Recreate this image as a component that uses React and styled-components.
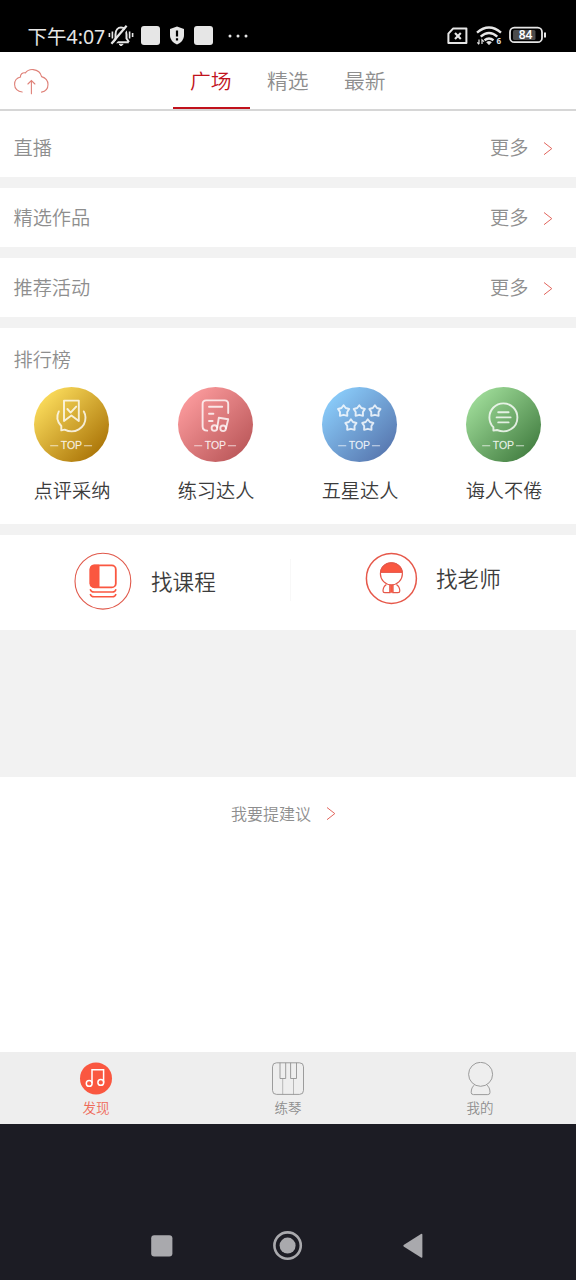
import React from 'react'
import styled, { createGlobalStyle } from 'styled-components'

const colors = {
  red: '#c1121c',
  coral: '#fa5740',
  grey: '#8e8e8e',
  dark: '#3c3c3c',
  line: '#d6d6d6',
  gap: '#f2f2f2',
  nav: '#1c1c24',
  navIcon: '#a9a9ad',
}

const sections = ['直播', '精选作品', '推荐活动']

const ranks = [
  { label: '点评采纳', from: '#fbdc5c', to: '#ab7508', Art: RibbonArt },
  { label: '练习达人', from: '#fb9a9c', to: '#bc595b', Art: SheetArt },
  { label: '五星达人', from: '#8accfa', to: '#5878b0', Art: StarsArt },
  { label: '诲人不倦', from: '#9edb98', to: '#458043', Art: ChatArt },
]

export default function App() {
  return (
    <>
      <GlobalStyle />
      <Screen>
        <StatusBar>
          <StatusGroup>
            <Clock>下午4:07</Clock>
            <MutedBell />
            <AppSquare />
            <Shield />
            <AppSquare />
            <Dots />
          </StatusGroup>
          <StatusRight>
            <StatusIcons />
          </StatusRight>
        </StatusBar>

        <Header>
          <UploadButton>
            <CloudUpload />
          </UploadButton>
          <Tab $active>广场</Tab>
          <Tab>精选</Tab>
          <Tab>最新</Tab>
        </Header>

        {sections.map((title, i) => (
          <SectionRow key={title} $first={i === 0}>
            <span>{title}</span>
            <More>
              更多
              <Chevron />
            </More>
          </SectionRow>
        ))}

        <RankPanel>
          <RankTitle>排行榜</RankTitle>
          <RankGrid>
            {ranks.map(rank => (
              <RankItem key={rank.label}>
                <Badge $from={rank.from} $to={rank.to}>
                  <RankIcon Art={rank.Art} />
                </Badge>
                <RankLabel>{rank.label}</RankLabel>
              </RankItem>
            ))}
          </RankGrid>
        </RankPanel>

        <FindPanel>
          <FindCourse>
            <CourseIcon />
            找课程
          </FindCourse>
          <Divider />
          <FindTeacher>
            <TeacherIcon />
            找老师
          </FindTeacher>
        </FindPanel>

        <Blank />

        <Feedback>
          我要提建议
          <Chevron />
        </Feedback>

        <TabBar>
          <TabItem $active>
            <DiscoverIcon />
            发现
          </TabItem>
          <TabItem>
            <PianoIcon />
            练琴
          </TabItem>
          <TabItem>
            <MeIcon />
            我的
          </TabItem>
        </TabBar>

        <SystemNav>
          <svg width="22" height="22" viewBox="0 0 22 22">
            <rect x="0.2" y="0.2" width="21.2" height="21.2" rx="3" fill={colors.navIcon} />
          </svg>
          <svg width="30" height="30" viewBox="0 0 30 30">
            <circle cx="14.6" cy="14.6" r="13.2" fill="none" stroke={colors.navIcon} strokeWidth="2.6" />
            <circle cx="14.6" cy="14.6" r="8" fill={colors.navIcon} />
          </svg>
          <svg width="21" height="26" viewBox="0 0 21 26">
            <path d="M1 11.8L18 1Q19.4 .5 19.4 1.8V24Q19.4 25.2 18 24.6L1 13.8Q-.4 12.8 1 11.8Z" fill={colors.navIcon} />
          </svg>
        </SystemNav>
      </Screen>
    </>
  )
}

function MutedBell() {
  return (
    <svg width="26" height="22" viewBox="0 0 26 22" fill="none" stroke="#e6e6e6" strokeWidth="2">
      <path d="M5.4 17.2H20.8M7.5 16V9.5C7.5 5.2 10 2.6 13 2.6S18.5 5.2 18.5 9.5V13.5L21 17" />
      <path d="M5.4 20L20.2 2.2" stroke="#000" strokeWidth="2" />
      <path d="M3.4 18.8L18.6 .8" strokeWidth="2.2" />
      <path d="M1.4 8V12M4.4 6.5V13.5M21.6 6.5V13.5M24.6 8V12" strokeWidth="1.6" />
      <path d="M11 19.3H15.2L13 20.8Z" fill="#e6e6e6" strokeWidth="1" />
    </svg>
  )
}

function Shield() {
  return (
    <svg width="14" height="19" viewBox="0 0 14 19">
      <path d="M7 .5L14 3V9C14 13.5 11 17 7 18.5C3 17 0 13.5 0 9V3Z" fill="#e6e6e6" />
      <path d="M7 4.5V10.4M7 12.2V14.6" stroke="#000" strokeWidth="2.2" />
    </svg>
  )
}

function Dots() {
  return (
    <svg width="20" height="4" viewBox="0 0 20 4" fill="#e6e6e6">
      <circle cx="2" cy="2" r="1.5" />
      <circle cx="10" cy="2" r="1.5" />
      <circle cx="18" cy="2" r="1.5" />
    </svg>
  )
}

function StatusIcons() {
  return (
    <svg width="100" height="22" viewBox="0 0 100 22" fill="none" stroke="#e6e6e6">
      <path d="M7 3.6H20.4V18H2.4V8.6Z" strokeWidth="2" strokeLinejoin="round" />
      <path d="M9 7.9L14.8 13.9M14.8 7.9L9 13.9" strokeWidth="2.1" />
      <path d="M31 7.6Q43 -2.6 55 7.6M34.7 11.6Q43 4.6 51.3 11.6M38.5 15.2Q43 11.6 47.5 15.2" strokeWidth="2.4" />
      <path d="M40.6 17.2Q43 15.3 45.4 17.2L43 19.8Z" fill="#e6e6e6" strokeWidth="0.6" />
      <path d="M33 14.6V19.1M31.4 17.4L33 19.4M36 19.1V14.8L38 16.6" strokeWidth="1.2" />
      <SmallDigit x="50.6" y="19.4">6</SmallDigit>
      <rect x="64" y="2.6" width="32" height="14.6" rx="4.3" strokeWidth="1.8" />
      <rect x="67" y="5" width="22.5" height="10" rx="1.5" fill="#4b4b4b" stroke="none" />
      <path d="M99 7.6V12.4" strokeWidth="2" />
      <BatteryText x="79.6" y="14.3" textAnchor="middle">84</BatteryText>
    </svg>
  )
}

function CloudUpload() {
  return (
    <svg width="35" height="28" viewBox="0 0 35 28" fill="none" stroke="#df8178" strokeWidth="1.1" strokeLinecap="round">
      <path d="M8.2 24C3.6 23.6.6 20.4.6 16.4C.6 12.6 3 9.8 6.5 9C6.1 6.4 8.4 4.3 11.4 4.9C13.3 2.4 16 1.3 19.2 1.6C23.4 2 26.7 4.6 27.6 8.6C31.3 9.7 34 12.6 34 16.6C34 20.6 31.4 23.5 27.5 24.1" />
      <path d="M17.4 25.8V12.7M13.9 16L17.4 12.5L20.9 16" />
    </svg>
  )
}

function Chevron() {
  return (
    <svg width="10" height="14" viewBox="0 0 10 14" fill="none" stroke="#e2655c" strokeWidth="1">
      <path d="M1 .5L8.8 6.6L1 12.7" />
    </svg>
  )
}

function RankIcon({ Art }) {
  return (
    <svg width="75" height="75" viewBox="0.4 0 75 75" fill="none" stroke="#fff" strokeOpacity="0.8" strokeWidth="1.9" strokeLinecap="round" strokeLinejoin="round">
      <Art />
      <path d="M17 58.7H24.2M50.8 58.7H58" strokeWidth="1.1" strokeOpacity="0.7" />
      <TopText x="37.8" y="62.4" textAnchor="middle">TOP</TopText>
    </svg>
  )
}

function RibbonArt() {
  return (
    <>
      <path d="M30.4 13.6H45.2V34L37.8 28.4L30.4 34Z" />
      <path d="M33.8 22L37 25.6L42.6 19.6" />
      <path d="M25.2 24.4C22.6 29.5 23.8 35 27.7 39V43.4L31 42.6C41 47.6 52 41 51.9 30.6C51.8 28.2 51.2 26 50.2 24.4" />
    </>
  )
}

function SheetArt() {
  return (
    <>
      <path d="M50.6 26V17Q50.6 13.4 47 13.4H28.6Q25 13.4 25 17V39.4Q25 43.4 29.6 43.6" />
      <path d="M31.4 19.8H44.6M31.4 26.8H35.8M31.4 34H35" />
      <path d="M39.6 40.6L41.2 30.8L50.6 32.2L48.4 41.2" />
      <circle cx="36.8" cy="41" r="2.8" />
      <circle cx="45.5" cy="41.3" r="2.8" />
    </>
  )
}

function StarsArt() {
  const star = 'M0 -5.8L2.1 -3L5.6 -2L3.6 1.1L3.7 4.8L0 3.8L-3.7 4.8L-3.6 1.1L-5.6 -2L-2.1 -3Z'
  const points = [[22, 24], [37.7, 24], [53.3, 24], [29.3, 38], [46.2, 38]]
  return points.map(([x, y]) => <path key={x} d={star} transform={`translate(${x} ${y})`} />)
}

function ChatArt() {
  return (
    <>
      <path d="M27.8 40.2V43.6L31.4 43C42 47.2 51.8 40.4 51.8 30.4C51.8 22.6 45.6 16.4 37.8 16.4S23.8 22.6 23.8 30.4C23.8 34.4 25.2 37.6 27.8 40.2Z" />
      <path d="M32.6 25.2H43M31 30.4H45M32.6 35.4H43" />
    </>
  )
}

function CourseIcon() {
  return (
    <svg width="58" height="58" viewBox="0 0 58 58" fill="none" stroke={colors.coral}>
      <circle cx="28.9" cy="29.2" r="27.9" stroke="#e0594b" strokeWidth="1.1" />
      <path d="M20 13.2H25V35.4H20Q16.2 35.4 16.2 31.6V17Q16.2 13.2 20 13.2Z" fill={colors.coral} />
      <rect x="16.4" y="13.4" width="25.4" height="22" rx="4" strokeWidth="1.8" />
      <path d="M16.2 37.2Q17 40.1 20 40.1H38.4Q41.2 40.1 42 37.2M16.2 42Q17 44.8 20 44.8H38.4Q41.2 44.8 42 42" strokeWidth="1.5" />
    </svg>
  )
}

function TeacherIcon() {
  return (
    <svg width="53" height="53" viewBox="0 0 53 53" fill="none" stroke="#e6584a">
      <circle cx="26.4" cy="26.4" r="25" strokeWidth="1.5" />
      <path d="M15.5 20.4C16 14.8 20.4 10.8 26.4 10.8S36.8 14.8 37.3 20.4Z" fill={colors.coral} />
      <circle cx="26.4" cy="21.8" r="11" strokeWidth="1.2" />
      <path d="M21.4 32.4C19 34 18 36.6 18 39Q18 40.6 19.8 40.6H24.8V33M31.4 32.4C33.8 34 34.8 36.6 34.8 39Q34.8 40.6 33 40.6H28V33" strokeWidth="1.2" />
      <path d="M25.2 33H27.8V40.6H25.2Z" fill={colors.coral} strokeWidth="0.4" />
    </svg>
  )
}

function DiscoverIcon() {
  return (
    <svg width="34" height="34" viewBox="0 0 34 34" fill="none" stroke="#fff" strokeWidth="1.5">
      <circle cx="17" cy="16.4" r="16" fill={colors.coral} stroke="none" />
      <path d="M13 21.2V7.8H24.6V20.4" />
      <circle cx="10.2" cy="21.4" r="2.9" />
      <circle cx="21.8" cy="20.4" r="2.9" />
    </svg>
  )
}

function PianoIcon() {
  return (
    <svg width="34" height="34" viewBox="0 0 34 34" fill="none" stroke="#929292" strokeWidth="0.9">
      <rect x="1.5" y="0.8" width="31" height="31.6" rx="4" />
      <path d="M9 .8V16.5H14.7V.8M19.6 .8V16.5H25.5V.8" />
      <path d="M11.7 16.5V32.4M22.5 16.5V32.4" strokeWidth="0.6" />
    </svg>
  )
}

function MeIcon() {
  return (
    <svg width="34" height="34" viewBox="0 0 34 34" fill="none" stroke="#929292" strokeWidth="0.9">
      <circle cx="17.6" cy="12.3" r="12" />
      <path d="M11.6 22.8C9.4 24.4 8.2 27 8.2 30.4Q8.2 32.6 10.4 32.6H24.8Q27 32.6 27 30.4C27 27 25.8 24.4 23.6 22.8" />
    </svg>
  )
}

const GlobalStyle = createGlobalStyle`
  body {
    margin: 0;
    background: #fff;
  }
  * {
    box-sizing: border-box;
  }
  svg {
    display: block;
    flex: none;
  }
`

const Screen = styled.div`
  width: 576px;
  height: 1280px;
  display: flex;
  flex-direction: column;
  overflow: hidden;
  font-family: 'Noto Sans CJK SC', sans-serif;
  font-size: 19.2px;
  font-weight: 350;
  line-height: 28px;
  color: ${colors.grey};
  background: #fff;
`

const StatusBar = styled.div`
  flex: none;
  height: 52px;
  padding: 19px 30px 0 27.5px;
  display: flex;
  justify-content: space-between;
  align-items: flex-start;
  background: #000;
`

const StatusGroup = styled.div`
  height: 33px;
  display: flex;
  align-items: center;
`

const StatusRight = styled.div`
  padding-top: 6px;
`

const Clock = styled.div`
  width: 80.5px;
  padding-top: 2px;
  color: #e6e6e6;
  font-family: 'Noto Sans', 'Noto Sans CJK SC', sans-serif;
  font-size: 19.5px;
  font-weight: 400;
  white-space: nowrap;
`

const AppSquare = styled.div`
  width: 19px;
  height: 19px;
  margin: 0 10px 0 7px;
  border-radius: 3px;
  background: #e6e6e6;

  & + svg + & {
    margin: 0 15px 0 10px;
  }
`

const SmallDigit = styled.text`
  font: bold 8px 'Noto Sans', sans-serif;
  fill: #e6e6e6;
  stroke: none;
`

const BatteryText = styled.text`
  font: 600 12px 'Noto Sans', sans-serif;
  fill: #fff;
  stroke: none;
`

const TopText = styled.text`
  font: 10.5px 'Liberation Sans', sans-serif;
  fill: rgba(255, 255, 255, 0.85);
  stroke: rgba(255, 255, 255, 0.5);
  stroke-width: 0.3px;
`

const Header = styled.div`
  flex: none;
  height: 59px;
  display: flex;
  border-bottom: 2px solid ${colors.line};
`

const UploadButton = styled.div`
  width: 173px;
  padding: 16px 0 0 14px;
`

const Tab = styled.div`
  width: 77px;
  height: 57px;
  padding: 14px 1.5px 0 0;
  text-align: center;
  font-size: 20.8px;
  color: ${props => (props.$active ? colors.red : colors.grey)};
  border-bottom: 2px solid ${props => (props.$active ? colors.red : 'transparent')};
`

const SectionRow = styled.div`
  flex: none;
  height: ${props => (props.$first ? 77 : 70)}px;
  padding: ${props => (props.$first ? 22 : 15)}px 22.6px 0 13.5px;
  display: flex;
  justify-content: space-between;
  border-bottom: 11px solid ${colors.gap};
`

const More = styled.div`
  height: 30px;
  display: flex;
  gap: 15px;

  svg {
    margin-top: 9px;
  }
`

const RankPanel = styled.div`
  flex: none;
  height: 207px;
  padding-top: 17px;
  border-bottom: 11px solid ${colors.gap};
`

const RankTitle = styled.div`
  padding-left: 13.5px;
`

const RankGrid = styled.div`
  padding-top: 14px;
  display: grid;
  grid-template-columns: repeat(4, 144px);
`

const RankItem = styled.div`
  display: flex;
  flex-direction: column;
  align-items: center;
  gap: 14px;
`

const Badge = styled.div`
  width: 75px;
  height: 75px;
  margin-right: 1px;
  border-radius: 50%;
  background: linear-gradient(135deg, ${props => props.$from} 12%, ${props => props.$to} 88%);
`

const RankLabel = styled.div`
  color: ${colors.dark};
`

const FindPanel = styled.div`
  flex: none;
  height: 95px;
  padding-top: 17px;
  display: flex;
  color: ${colors.dark};
  font-size: 21.6px;
`

const FindCourse = styled.div`
  width: 290px;
  height: 58px;
  padding-left: 74px;
  display: flex;
  align-items: center;
  gap: 19px;
`

const Divider = styled.div`
  width: 1px;
  height: 42px;
  margin-top: 7px;
  background: #f8f8f8;
`

const FindTeacher = styled.div`
  height: 52px;
  padding-left: 74px;
  display: flex;
  align-items: center;
  gap: 18px;
`

const Blank = styled.div`
  flex: none;
  height: 147px;
  background: ${colors.gap};
`

const Feedback = styled.div`
  flex: none;
  height: 275px;
  padding: 22px 0 0 231px;
  display: flex;
  gap: 15px;
  font-size: 16px;

  svg {
    margin-top: 8px;
  }
`

const TabBar = styled.div`
  flex: none;
  height: 72px;
  display: grid;
  grid-template-columns: repeat(3, 192px);
  background: #eee;
`

const TabItem = styled.div`
  padding-top: 10px;
  display: flex;
  flex-direction: column;
  align-items: center;
  gap: 1px;
  font-size: 13.5px;
  line-height: 20px;
  color: ${props => (props.$active ? '#ee6a58' : colors.grey)};
`

const SystemNav = styled.div`
  flex: 1;
  padding: 87px 152px 0 151px;
  display: flex;
  justify-content: space-between;
  align-items: center;
  background: ${colors.nav};
`
